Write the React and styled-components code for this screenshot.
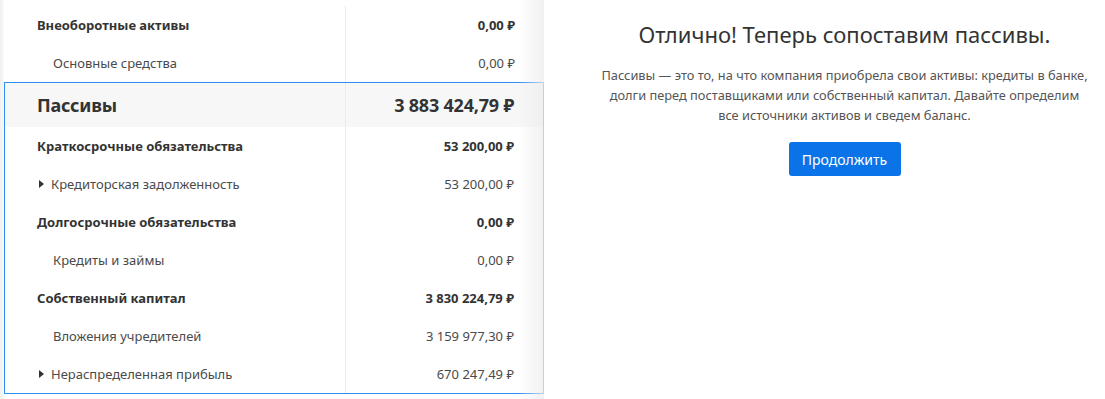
import React from "react";
import styled, { createGlobalStyle } from "styled-components";

const Global = createGlobalStyle`
  html, body { margin: 0; padding: 0; background: #fff; }
  body { font-family: "Noto Sans", "Open Sans", sans-serif; color: #333; }
  * { box-sizing: border-box; }
`;

const Page = styled.div`
  display: flex;
  width: 1105px;
  height: 399px;
  overflow: hidden;
`;

const LeftPanel = styled.div`
  position: relative;
  width: 544px;
  flex: none;
  padding: 6px 0 0 4px;
  background: linear-gradient(to right, #f1f1f1 0, #f6f6f6 3px, #fff 4px);
  &::after {
    content: "";
    position: absolute;
    top: 0; right: 0; bottom: 0;
    width: 26px;
    pointer-events: none;
    background: linear-gradient(to right, rgba(240,240,240,0), rgba(236,236,236,0.75));
  }
`;

const Section = styled.div`
  border: ${(p) => (p.$active ? "1px solid #2d8ff0" : "none")};
  padding: ${(p) => (p.$active ? "0" : "0 0 0 1px")};
`;

const Row = styled.div`
  display: grid;
  grid-template-columns: 340px 1fr;
  height: ${(p) => (p.$head ? "44px" : "38px")};
  background: ${(p) => (p.$head ? "#f7f7f7" : "transparent")};
  font-size: ${(p) => (p.$head ? "18px" : "13px")};
  font-weight: ${(p) => (p.$bold || p.$head ? 700 : 400)};
  color: ${(p) => (p.$bold || p.$head ? "#333" : "#4a4a4a")};
  letter-spacing: ${(p) => (p.$head ? "-0.2px" : "0")};
`;

const Label = styled.div`
  display: flex;
  align-items: center;
  gap: 7px;
  padding-left: ${(p) => (p.$level === 2 ? "33px" : p.$level === 1 ? "48px" : "32px")};
  white-space: nowrap;
`;

const Value = styled.div`
  display: flex;
  align-items: center;
  justify-content: flex-end;
  padding-right: 29px;
  border-left: 1px solid #ebebeb;
  white-space: nowrap;
`;

const Caret = styled.span`
  width: 0;
  height: 0;
  border-top: 4px solid transparent;
  border-bottom: 4px solid transparent;
  border-left: 5px solid #333;
  margin-left: 1px;
`;

const RightPanel = styled.div`
  flex: 1;
  display: flex;
  flex-direction: column;
  align-items: center;
  padding: 19px 0 0 40px;
`;

const Title = styled.h1`
  margin: 0;
  font-size: 22px;
  font-weight: 400;
  color: #333;
  line-height: 30px;
`;

const Text = styled.p`
  margin: 16px 0 0;
  width: 520px;
  text-align: center;
  font-size: 12.8px;
  line-height: 20px;
  color: #555;
  white-space: nowrap;
`;

const Button = styled.button`
  margin-top: 17px;
  width: 112px;
  height: 34px;
  border: none;
  border-radius: 3px;
  background: #0a73e8;
  color: #fff;
  font-family: inherit;
  font-size: 14px;
  cursor: pointer;
`;

const top = [
  { label: "Внеоборотные активы", value: "0,00 ₽", bold: true },
  { label: "Основные средства", value: "0,00 ₽", level: 1 },
];

const rows = [
  { label: "Краткосрочные обязательства", value: "53 200,00 ₽", bold: true },
  { label: "Кредиторская задолженность", value: "53 200,00 ₽", level: 2 },
  { label: "Долгосрочные обязательства", value: "0,00 ₽", bold: true },
  { label: "Кредиты и займы", value: "0,00 ₽", level: 1 },
  { label: "Собственный капитал", value: "3 830 224,79 ₽", bold: true },
  { label: "Вложения учредителей", value: "3 159 977,30 ₽", level: 1 },
  { label: "Нераспределенная прибыль", value: "670 247,49 ₽", level: 2 },
];

const Line = ({ r }) => (
  <Row $bold={r.bold}>
    <Label $level={r.level}>
      {r.level === 2 && <Caret />}
      {r.label}
    </Label>
    <Value>{r.value}</Value>
  </Row>
);

export default function App() {
  return (
    <Page>
      <Global />
      <LeftPanel>
        <Section>
          {top.map((r) => (
            <Line key={r.label} r={r} />
          ))}
        </Section>
        <Section $active>
          <Row $head>
            <Label>Пассивы</Label>
            <Value>3 883 424,79 ₽</Value>
          </Row>
          {rows.map((r) => (
            <Line key={r.label} r={r} />
          ))}
        </Section>
      </LeftPanel>
      <RightPanel>
        <Title>Отлично! Теперь сопоставим пассивы.</Title>
        <Text>
          Пассивы — это то, на что компания приобрела свои активы: кредиты в банке,
          <br />
          долги перед поставщиками или собственный капитал. Давайте определим
          <br />
          все источники активов и сведем баланс.
        </Text>
        <Button>Продолжить</Button>
      </RightPanel>
    </Page>
  );
}
